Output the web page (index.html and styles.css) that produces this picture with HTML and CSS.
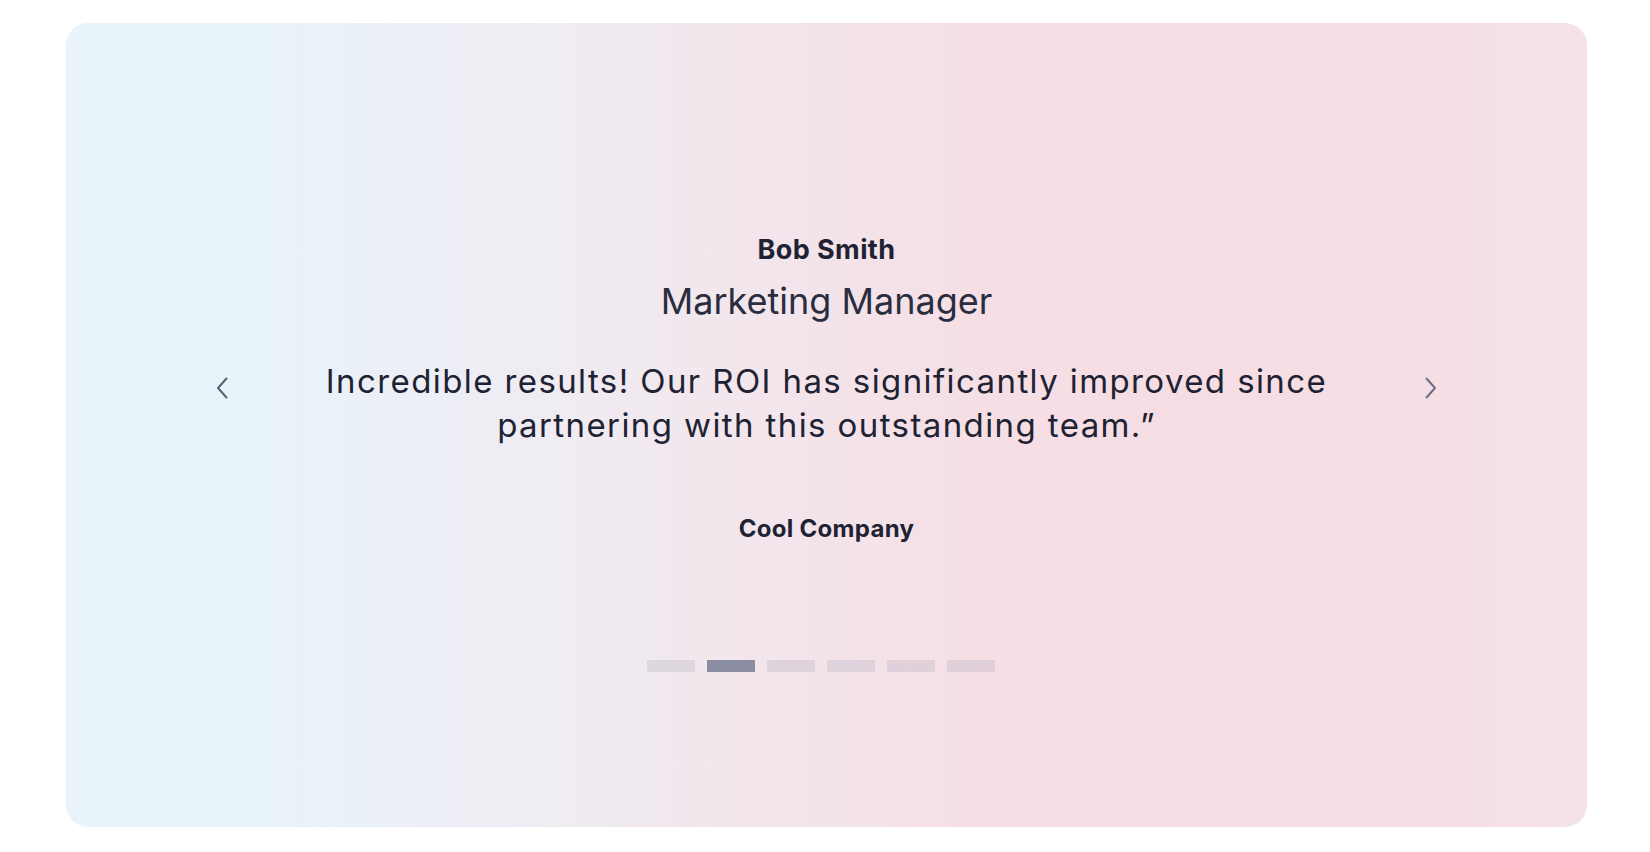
FILE: index.html
```html
<!DOCTYPE html>
<html lang="en">
<head>
<meta charset="utf-8">
<title>Testimonial</title>
<link rel="stylesheet" href="styles.css">
</head>
<body>
<div class="page">
  <section class="card">
    <div class="name">Bob Smith</div>
    <div class="role">Marketing Manager</div>
    <div class="quote-row">
      <button class="arrow" aria-label="Previous">
        <svg width="12" height="22" viewBox="0 0 12 22"><path d="M10.5 1.5 L2 11 L10.5 20.5" fill="none" stroke="#5b5f76" stroke-width="2" stroke-linecap="round" stroke-linejoin="round"/></svg>
      </button>
      <p class="quote">Incredible results! Our ROI has significantly improved since partnering with this outstanding team.”</p>
      <button class="arrow" aria-label="Next">
        <svg width="12" height="22" viewBox="0 0 12 22"><path d="M1.5 1.5 L10 11 L1.5 20.5" fill="none" stroke="#6b6f86" stroke-width="2" stroke-linecap="round" stroke-linejoin="round"/></svg>
      </button>
    </div>
    <div class="company">Cool Company</div>
    <div class="dots">
      <span class="dot"></span>
      <span class="dot active"></span>
      <span class="dot"></span>
      <span class="dot"></span>
      <span class="dot"></span>
      <span class="dot"></span>
    </div>
  </section>
</div>
</body>
</html>
```
FILE: styles.css
```css
html, body {
  margin: 0;
  padding: 0;
  background: #ffffff;
}
body {
  font-family: "Inter", "Liberation Sans", sans-serif;
  color: #1f2233;
}
.page {
  padding: 23px 63px 25px 66px;
}
.card {
  height: 804px;
  box-sizing: border-box;
  border-radius: 22px;
  background: linear-gradient(90deg, #e8f4fa 0%, #e8f3fa 11%, #ebf0f7 20%, #efecf2 32%, #f2e6ec 45%, #f5dfe5 60%, #f5dde3 72%, #f5dee4 88%, #f4e2e8 100%);
  display: flex;
  flex-direction: column;
  align-items: center;
  padding-top: 211px;
}
.name {
  font-size: 27px;
  line-height: 32px;
  font-weight: 700;
  letter-spacing: 0.4px;
}
.role {
  margin-top: 13px;
  font-size: 36px;
  line-height: 44px;
  font-weight: 400;
  color: #2a2d40;
}
.quote-row {
  align-self: stretch;
  display: flex;
  align-items: center;
  justify-content: space-between;
  padding: 0 150px;
  margin-top: 36px;
}
.arrow {
  border: 0;
  background: none;
  padding: 0;
  width: 12px;
  height: 22px;
  display: flex;
  margin-bottom: 30px;
  cursor: pointer;
}
.quote {
  margin: 0;
  width: 1020px;
  text-align: center;
  font-size: 33px;
  line-height: 44px;
  font-weight: 400;
  letter-spacing: 1.4px;
  color: #1f2233;
}
.company {
  margin-top: 67px;
  font-size: 24px;
  line-height: 30px;
  font-weight: 700;
  letter-spacing: 0.3px;
}
.dots {
  margin-top: 116px;
  display: flex;
  gap: 12px;
  margin-right: 12px;
}
.dot {
  width: 48px;
  height: 12px;
  background: rgba(150, 150, 175, 0.22);
}
.dot.active {
  background: #8b8ea3;
}
```
